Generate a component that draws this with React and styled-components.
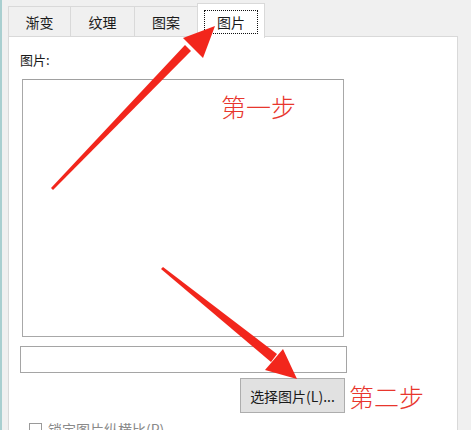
import React from 'react';
import styled, {createGlobalStyle} from 'styled-components';

const GlobalStyle = createGlobalStyle`
  html, body {
    margin: 0;
    padding: 0;
    background: #f0f0f0;
  }
  * { box-sizing: border-box; }
`;

const UI_FONT = `"Noto Sans CJK SC", "Noto Sans", sans-serif`;

const tabs = ['渐变', '纹理', '图案', '图片'];
const tabWidths = [63, 65, 64, 68];

const App = () => {
    return (
        <Window>
            <GlobalStyle/>
            <TabBar>
                {tabs.map((name, i) => (
                    <Tab key={name} $active={i === 3} $width={tabWidths[i]}>
                        {i === 3 ? <FocusRing>{name}</FocusRing> : name}
                    </Tab>
                ))}
            </TabBar>
            <Panel>
                <Label>图片:</Label>
                <PictureBox>
                    <Note>第一步</Note>
                </PictureBox>
                <PathInput/>
                <ButtonRow>
                    <Button>选择图片(L)...</Button>
                    <Note>第二步</Note>
                </ButtonRow>
                <CheckRow>
                    <CheckBox/>
                    <CheckLabel>锁定图片纵横比(P)</CheckLabel>
                </CheckRow>
            </Panel>
            <Arrows viewBox="0 0 471 430" width="471" height="430">
                <polygon
                    fill="#f2261c"
                    points="51,188 53,190 191,51 185,45"
                />
                <polygon fill="#f2261c" points="215,26 203,58 183,38"/>
                <polygon
                    fill="#f2261c"
                    points="161,269 163,267 277,354 271,362"
                />
                <polygon fill="#f2261c" points="297,379 265,370 283,349"/>
            </Arrows>
        </Window>
    );
};

export default App;

const Window = styled.div`
  position: relative;
  width: 471px;
  height: 430px;
  overflow: hidden;
  background: #f0f0f0;
  border-left: 2px solid #a9cfd0;
  padding: 0 13px 0 6px;
  font-family: ${UI_FONT};
`;

const TabBar = styled.div`
  display: flex;
  align-items: flex-end;
  height: 37px;
  position: relative;
  z-index: 1;
`;

const Tab = styled.div`
  width: ${({$width}) => $width}px;
  height: ${({$active}) => ($active ? 35 : 31)}px;
  display: flex;
  align-items: center;
  justify-content: center;
  font-size: 14px;
  color: #1a1a1a;
  background: ${({$active}) => ($active ? '#ffffff' : '#f0f0f0')};
  border: 1px solid #d9d9d9;
  border-bottom: ${({$active}) => ($active ? 'none' : '1px solid #d9d9d9')};
  margin-right: -1px;
  margin-bottom: ${({$active}) => ($active ? '-1px' : '0')};
  padding-top: ${({$active}) => ($active ? '1px' : '0')};
`;

const FocusRing = styled.span`
  display: flex;
  align-items: center;
  justify-content: center;
  width: 54px;
  height: 24px;
  border: 1px dotted #111;
`;

const Panel = styled.div`
  background: #fff;
  border: 1px solid #d9d9d9;
  height: 420px;
  margin-top: -1px;
  padding: 14px 0 0 11px;
  display: flex;
  flex-direction: column;
  align-items: flex-start;
`;

const Label = styled.div`
  font-size: 13px;
  line-height: 17px;
  color: #1a1a1a;
`;

const PictureBox = styled.div`
  margin: 11px 0 0 2px;
  width: 322px;
  height: 258px;
  border: 1px solid #a8a8a8;
  border-top-color: #a0a0a0;
  padding: 11px 0 0 198px;
`;

const Note = styled.span`
  font-family: ${UI_FONT};
  font-size: 25px;
  line-height: 30px;
  font-weight: 300;
  color: #e8362d;
  white-space: nowrap;
`;

const PathInput = styled.div`
  margin-top: 9px;
  width: 327px;
  height: 27px;
  border: 1px solid #a5a5a5;
  background: #fff;
`;

const ButtonRow = styled.div`
  display: flex;
  align-items: center;
  gap: 4px;
  margin: 5px 0 0 220px;
`;

const Button = styled.div`
  width: 105px;
  height: 35px;
  display: flex;
  align-items: center;
  justify-content: center;
  font-size: 14px;
  color: #1a1a1a;
  background: #e1e1e1;
  border: 1px solid #adadad;
`;

const CheckRow = styled.div`
  display: flex;
  align-items: center;
  gap: 6px;
  margin: 6px 0 0 9px;
`;

const CheckBox = styled.div`
  width: 13px;
  height: 13px;
  border: 1px solid #9a9a9a;
  background: #fff;
`;

const CheckLabel = styled.span`
  font-size: 14px;
  color: #8a8a8a;
`;

const Arrows = styled.svg`
  position: absolute;
  left: -2px;
  top: 0;
  pointer-events: none;
  z-index: 2;
`;
